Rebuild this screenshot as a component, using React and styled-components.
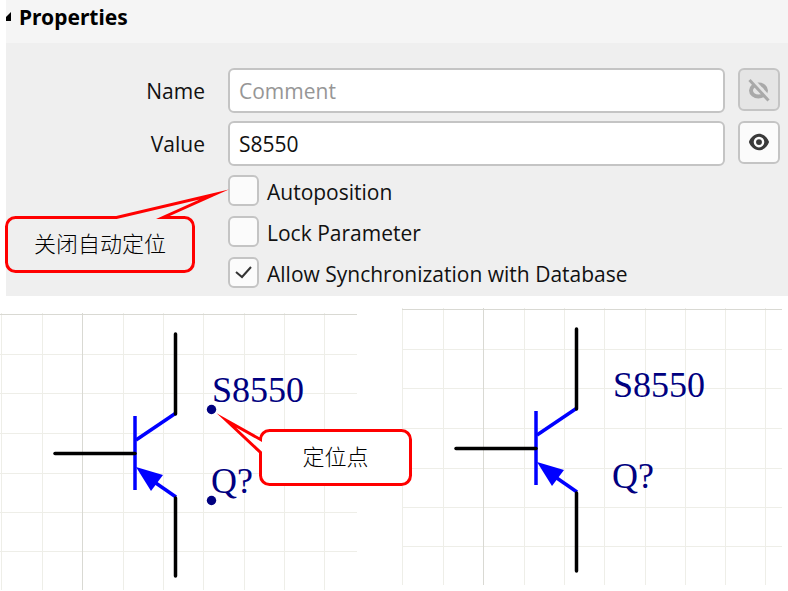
import { useState } from "react";
import styled, { createGlobalStyle } from "styled-components";

const GlobalStyle = createGlobalStyle`
  * {
    box-sizing: border-box;
  }
  body {
    margin: 0;
    background: #ffffff;
    color: #111111;
    font-family: "Open Sans", "Noto Sans", sans-serif;
    font-size: 21px;
    line-height: 28px;
  }
`;

const Page = styled.main`
  overflow: hidden;
`;
const Panel = styled.section`
  position: relative;
  margin-left: 6px;
  background: #efefef;
`;
const Header = styled.h2`
  display: flex;
  align-items: center;
  gap: 8px;
  margin: 0;
  padding: 3px 0 12px;
  background: #f5f5f5;
  color: #000000;
  font-family: "Noto Sans", sans-serif;
  font-size: 21px;
  font-weight: 700;
`;
const Fields = styled.form`
  padding: 25px 8px 8px 0;
`;
const Row = styled.div`
  display: grid;
  grid-template-columns: 199px 1fr 42px;
  align-items: start;
  margin-bottom: 8px;
`;
const Label = styled.label`
  padding-top: 9px;
  text-align: right;
`;
const Input = styled.input`
  min-width: 0;
  height: 45px;
  margin: 0 13px 0 23px;
  padding: 0 9px;
  border: 2px solid #c4c4c4;
  border-radius: 6px;
  background: #ffffff;
  color: #111111;
  font: inherit;
  outline: none;
  &::placeholder {
    color: #969696;
    opacity: 1;
  }
`;
const IconButton = styled.button`
  display: flex;
  align-items: center;
  justify-content: center;
  height: 43px;
  padding: 0;
  border: 2px solid #c4c4c4;
  border-radius: 6px;
  background: ${(props) => (props.disabled ? "#e5e5e5" : "#fbfbfb")};
  color: ${(props) => (props.disabled ? "#a9a9a9" : "#3a3a3a")};
`;
const Checks = styled.div`
  display: flex;
  flex-direction: column;
  align-items: flex-start;
  gap: 10px;
  margin: 9px 0 0 222px;
`;
const Check = styled.label`
  display: flex;
  align-items: center;
  gap: 8px;
`;
const CheckText = styled.span`
  padding-top: 2px;
`;
const Box = styled.span`
  display: grid;
  width: 31px;
  height: 31px;
  > * {
    grid-area: 1 / 1;
  }
`;
const Checkbox = styled.input`
  appearance: none;
  width: 31px;
  height: 31px;
  margin: 0;
  border: 2px solid #c4c4c4;
  border-radius: 6px;
  background: #fbfbfb;
`;
const Tick = styled.svg`
  place-self: center;
  pointer-events: none;
`;

const Sheets = styled.section`
  display: flex;
  align-items: flex-start;
  gap: 45px;
  padding: 12px 6px 0 0;
`;
const Sheet = styled.figure`
  position: relative;
  flex: ${(props) => props.$size} 1 0;
  margin: ${(props) => props.$top}px 0 0;
`;
const Drawing = styled.svg`
  display: block;
  width: 100%;
  height: auto;
  font-family: "Liberation Serif", serif;
  font-size: 36px;
`;

const Callout = styled.div`
  position: absolute;
  z-index: 1;
  left: ${(props) => props.$left}px;
  top: ${(props) => props.$top}px;
  display: flex;
  align-items: center;
  justify-content: center;
  width: ${(props) => props.$width}px;
  height: 57px;
  padding-bottom: 5px;
  color: #000000;
  font-family: "Noto Sans CJK SC", sans-serif;
  font-size: 22px;
  font-weight: 300;
`;
const Bubble = styled.svg`
  position: absolute;
  inset: 0;
  width: 100%;
  height: 100%;
  overflow: visible;
`;
const CalloutText = styled.span`
  position: relative;
`;

const Eye = () => (
  <svg width="22" height="22" viewBox="0 1 24 24" fill="currentColor">
    <path d="M12 3C7 3 2.700 7 1 12c1.700 5 6 9 11 9s9.300-4 11-9c-1.700-5-6-9-11-9zm0 14.800a5.800 5.800 0 1 1 0-11.600 5.800 5.800 0 0 1 0 11.600zm0-9a3.200 3.200 0 1 0 0 6.400 3.200 3.200 0 0 0 0-6.400z" />
  </svg>
);

const EyeOff = () => (
  <svg width="22" height="24" viewBox="0 0 22 24">
    <ellipse cx="10.500" cy="12.500" rx="7.500" ry="6" fill="none" stroke="currentColor" strokeWidth="4" />
    <path d="M3 1L21 20.500" stroke="#e5e5e5" strokeWidth="5" />
    <path d="M1.500 2L20.500 22.500" stroke="currentColor" strokeWidth="3" />
  </svg>
);

const CheckItem = ({ text, initial }) => {
  const [checked, setChecked] = useState(initial);
  return (
    <Check>
      <Box>
        <Checkbox
          type="checkbox"
          checked={checked}
          onChange={(e) => setChecked(e.target.checked)}
        />
        {checked && (
          <Tick width="17" height="13" viewBox="0 0 17 13" fill="none" stroke="#333333" strokeWidth="2">
            <path d="M1 6L7 11L16 1" />
          </Tick>
        )}
      </Box>
      <CheckText>{text}</CheckText>
    </Check>
  );
};

const columns = [1, 42, 123, 163, 203, 244, 284, 324, 364];
const rows = [41, 80, 120, 160, 199, 238];

const Schematic = ({ x, width, anchors }) => (
  <Drawing viewBox={`${x} 0 ${width} 277`} role="img" aria-label="PNP transistor S8550">
    <g stroke="#eeeee8" strokeWidth="1">
      {columns.map((c) => (
        <path key={c} d={`M${c + 0.5} 0V277`} />
      ))}
      {rows.map((r) => (
        <path key={r} d={`M0 ${r + 0.5}H382`} />
      ))}
      <path stroke="#d9d9d3" d="M82.500 0V277M0 1.500H382" />
    </g>
    <g fill="none" stroke="#0000ff" strokeWidth="3.500">
      <path d="M135 103V177" />
      <path d="M136 127L176 100" />
      <path d="M150 166L176 184" />
      <path d="M136 154L163 162L151 178Z" fill="#0000ff" stroke="none" />
    </g>
    <g fill="none" stroke="#000000" strokeWidth="3.500" strokeLinecap="round">
      <path d="M175.500 21V101" />
      <path d="M175.500 185V263" />
      <path d="M55 140.500H135" />
    </g>
    <g fill="#000080">
      <text x="212" y="89">S8550</text>
      <text x="211" y="180">Q?</text>
      {anchors && (
        <>
          <circle cx="211.500" cy="96.500" r="4.700" />
          <circle cx="211.500" cy="187.500" r="4.700" />
        </>
      )}
    </g>
  </Drawing>
);

export default function App() {
  const [value, setValue] = useState("S8550");
  return (
    <Page>
      <GlobalStyle />
      <Panel>
        <Header>
          <svg width="5" height="10" viewBox="0 0 5 10">
            <path d="M5 0V9H0V5Z" fill="#000000" />
          </svg>
          Properties
        </Header>
        <Fields>
          <Row>
            <Label htmlFor="name">Name</Label>
            <Input id="name" placeholder="Comment" />
            <IconButton type="button" disabled aria-label="Show name">
              <EyeOff />
            </IconButton>
          </Row>
          <Row>
            <Label htmlFor="value">Value</Label>
            <Input id="value" value={value} onChange={(e) => setValue(e.target.value)} />
            <IconButton type="button" aria-label="Hide value">
              <Eye />
            </IconButton>
          </Row>
          <Checks>
            <CheckItem text="Autoposition" initial={false} />
            <CheckItem text="Lock Parameter" initial={false} />
            <CheckItem text="Allow Synchronization with Database" initial />
          </Checks>
        </Fields>
        <Callout $left={-1} $top={216} $width={190}>
          <Bubble fill="none" stroke="#ff0000" strokeWidth="3" strokeMiterlimit="20">
            <path d="M10.500 1.500H111.500L209 -21.500L158 1.500H179.500A9 9 0 0 1 188.500 10.500V46.500A9 9 0 0 1 179.500 55.500H10.500A9 9 0 0 1 1.500 46.500V10.500A9 9 0 0 1 10.500 1.500Z" />
          </Bubble>
          <CalloutText>关闭自动定位</CalloutText>
        </Callout>
      </Panel>
      <Sheets>
        <Sheet $size={357} $top={5}>
          <Schematic x={0} width={357} anchors />
          <Callout $left={259} $top={116} $width={153}>
            <Bubble fill="#ffffff" stroke="#ff0000" strokeWidth="3" strokeMiterlimit="20">
              <path d="M10.500 1.500H142.500A9 9 0 0 1 151.500 10.500V46.500A9 9 0 0 1 142.500 55.500H10.500A9 9 0 0 1 1.500 46.500V23.500L-32.500 -8.500L1.500 10.500A9 9 0 0 1 10.500 1.500Z" />
            </Bubble>
            <CalloutText>定位点</CalloutText>
          </Callout>
        </Sheet>
        <Sheet $size={380} $top={0}>
          <Schematic x={1} width={380} />
        </Sheet>
      </Sheets>
    </Page>
  );
}
